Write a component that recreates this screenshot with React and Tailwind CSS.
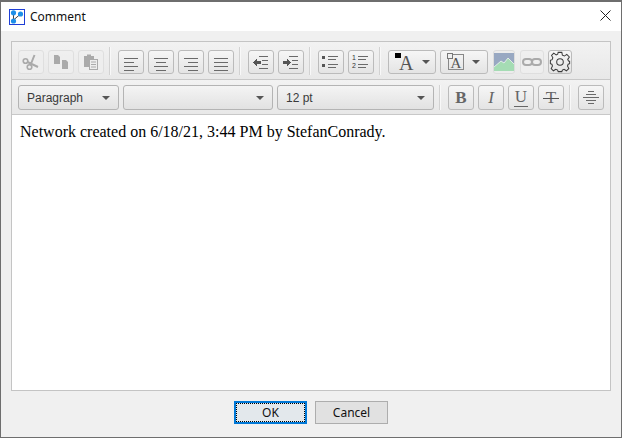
import React from 'react';

const Lines = ({ rows }) => (
  <svg width="20" height="20" viewBox="0 0 20 20" fill="none" stroke="#6a6a6a" strokeWidth="1" shapeRendering="crispEdges">
    {rows.map(([a, b], i) => <path key={i} d={`M${a} ${6.5 + i * 4}H${b}`} />)}
  </svg>
);

const IndentIcon = ({ flip }) => (
  <svg width="20" height="20" viewBox="0 0 20 20" fill="none" stroke="#6a6a6a" shapeRendering="crispEdges">
    <path d="M8 4.5H17M11 8.5H17M11 12.5H17M8 16.5H17" strokeWidth="1" />
    {flip
      ? <path d="M2 9H6V7L10 10.5L6 14V12H2Z" fill="#555" stroke="none" />
      : <path d="M10 9H6V7L2 10.5L6 14V12H10Z" fill="#555" stroke="none" />}
  </svg>
);

const Btn = ({ children, disabled, w = 'w-[26px]' }) => (
  <div className={`${w} h-full flex items-center justify-center rounded-[3px] border ${disabled ? 'border-[#dcdcdc] bg-[#efefef] opacity-80' : 'border-[#bbbbbb] bg-gradient-to-b from-[#f6f6f6] to-[#e4e4e4]'}`}>
    {children}
  </div>
);

const Sep = () => <div className="ml-[5px] mr-[7px] w-[2px] h-[28px] self-center border-l border-[#d2d2d2] bg-[#f8f8f8]" />;

const Arrow = () => <div className="w-0 h-0 border-x-[4px] border-x-transparent border-t-[4px] border-t-[#555]" />;

const Select = ({ label, w }) => (
  <div className={`${w} h-full flex items-center justify-between pl-[8px] pr-[8px] rounded-[3px] border border-[#b4b4b4] bg-gradient-to-b from-[#f4f4f4] to-[#e2e2e2] text-[12px] text-[#3a3a3a]`}>
    <span>{label}</span>
    <Arrow />
  </div>
);

const Gear = () => (
  <svg width="24" height="24" viewBox="0 0 24 24" fill="none" stroke="#3a3a3a" strokeWidth="1.1">
    <circle cx="12" cy="12" r="3.6" />
    <path d="M10 1.5H14L14.6 4.6L16.8 5.5L19.4 3.7L22.2 6.5L20.4 9.1L21.3 10.9L22.5 11.2V13.8L20.9 14.4L20.2 16.4L21.6 19.2L19 21.6L16.4 20L14.6 20.9L14 22.5H10L9.4 20.9L7.4 20L4.8 21.6L2.4 19.2L3.8 16.4L3.1 14.4L1.5 13.8V10.2L3.4 9.5L4.2 7.4L2.8 4.8L5.2 2.4L7.8 4.2L9.5 3.4Z" />
  </svg>
);

const WindowIcon = () => (
  <svg width="16" height="16" viewBox="0 0 16 16">
    <rect x="0.5" y="0.5" width="15" height="15" fill="#fff" stroke="#1f3fd6" />
    <path d="M4.5 4V12M4.5 11L11.5 5" stroke="#444" strokeWidth="1" />
    <circle cx="4.5" cy="3.8" r="2.6" fill="#1d8fe8" />
    <circle cx="4.5" cy="12" r="2.6" fill="#1d8fe8" />
    <circle cx="11.5" cy="5" r="2.6" fill="#1d8fe8" />
  </svg>
);

const App = () => {
  return (
    <div className="w-[622px] h-[438px] flex flex-col border border-t-2 border-[#6e6e6e] bg-[#f0f0f0] font-['Liberation_Sans',sans-serif] overflow-hidden">
      <div className="h-[29px] shrink-0 bg-white flex items-center pl-[8px] pr-[10px]">
        <WindowIcon />
        <span className="ml-[5px] text-[12px] text-[#111] font-['Noto_Sans',sans-serif]">Comment</span>
        <svg className="ml-auto mb-[2px]" width="11" height="11" viewBox="0 0 11 11" stroke="#222" strokeWidth="1">
          <path d="M0.5 0.5L10.5 10.5M10.5 0.5L0.5 10.5" />
        </svg>
      </div>

      <div className="flex-1 flex flex-col px-[10px] pt-[10px] min-h-0">
        <div className="h-[350px] flex flex-col border border-[#c4c4c4]">
          <div className="h-[38px] shrink-0 flex items-center pl-[6px] pt-[1px] bg-gradient-to-b from-[#f2f2f2] to-[#e8e8e8] border-b border-[#c8c8c8]">
            <div className="h-[24px] mt-[1px] flex items-center gap-[4px]">
              <Btn disabled>
                <svg width="20" height="20" viewBox="0 0 20 20" fill="none" stroke="#9a9a9a" strokeWidth="1.6">
                  <circle cx="4.5" cy="9" r="2.3" />
                  <circle cx="8.5" cy="15" r="2.3" />
                  <path d="M6.5 10L17 15M9.5 13L13.5 3" strokeWidth="2" />
                </svg>
              </Btn>
              <Btn disabled>
                <svg width="18" height="18" viewBox="0 0 18 18" fill="#9a9a9a">
                  <path d="M2 2H6L8 4V11H2Z M10 7H14L16 9V16H10Z" />
                </svg>
              </Btn>
              <Btn disabled>
                <svg width="18" height="18" viewBox="0 0 18 18">
                  <path d="M2 3H5V1.5H9V3H12V14H2Z" fill="#9a9a9a" />
                  <rect x="7.5" y="6.5" width="8" height="10" fill="#eee" stroke="#9a9a9a" />
                  <path d="M9 9H14M9 11.5H14M9 14H14" stroke="#9a9a9a" />
                </svg>
              </Btn>
            </div>
            <Sep />
            <div className="h-[24px] mt-[1px] flex items-center gap-[4px]">
              <Btn><Lines rows={[[3, 17], [3, 13], [3, 17], [3, 13]]} /></Btn>
              <Btn><Lines rows={[[3, 17], [5, 15], [3, 17], [5, 15]]} /></Btn>
              <Btn><Lines rows={[[3, 17], [7, 17], [3, 17], [7, 17]]} /></Btn>
              <Btn><Lines rows={[[3, 17], [3, 17], [3, 17], [3, 17]]} /></Btn>
            </div>
            <Sep />
            <div className="h-[24px] mt-[1px] flex items-center gap-[4px]">
              <Btn><IndentIcon /></Btn>
              <Btn><IndentIcon flip /></Btn>
            </div>
            <Sep />
            <div className="h-[24px] mt-[1px] flex items-center gap-[4px]">
              <Btn>
                <svg width="20" height="16" viewBox="0 0 20 16" stroke="#6a6a6a" shapeRendering="crispEdges">
                  <rect x="1" y="2" width="3" height="3" fill="#555" stroke="none" />
                  <rect x="1" y="10" width="3" height="3" fill="#555" stroke="none" />
                  <path d="M7 2.5H17M7 5.5H15M7 10.5H17M7 13.5H15" />
                </svg>
              </Btn>
              <Btn>
                <div className="relative w-[20px] h-[16px]">
                  <span className="absolute left-[1px] top-[0px] text-[7px] leading-[8px] text-[#333]">1</span>
                  <span className="absolute left-[1px] top-[8px] text-[7px] leading-[8px] text-[#333]">2</span>
                  <svg className="absolute left-0 top-0" width="20" height="16" viewBox="0 0 20 16" stroke="#6a6a6a" shapeRendering="crispEdges">
                    <path d="M7 2.5H17M7 5.5H15M7 10.5H17M7 13.5H15" />
                  </svg>
                </div>
              </Btn>
            </div>
            <Sep />
            <div className="h-[24px] mt-[1px] flex items-center">
              <Btn w="w-[48px]">
                <div className="relative w-[20px] h-[22px] font-['Liberation_Serif',serif] text-[20px] leading-[24px] text-[#555] text-right pr-[1px]">
                  A
                  <div className="absolute left-0 top-[2px] w-[6px] h-[5px] bg-black" />
                </div>
                <div className="ml-[7px]"><Arrow /></div>
              </Btn>
              <div className="w-[4px]" />
              <Btn w="w-[48px]">
                <div className="relative w-[16px] h-[16px] border border-[#888] font-['Liberation_Serif',serif] text-[15px] leading-[16px] text-[#555] text-center">
                  A
                  <div className="absolute left-[-2px] top-[-2px] w-[6px] h-[6px] border border-[#777] bg-[#f0f0f0]" />
                </div>
                <div className="ml-[8px]"><Arrow /></div>
              </Btn>
              <div className="w-[5px]" />
              <Btn disabled={false} w="w-[22px] !border-[#dcdcdc] !bg-none !bg-[#ececec]">
                <svg width="20" height="18" viewBox="0 0 20 18">
                  <rect width="20" height="18" fill="#98a8c2" />
                  <path d="M0 18V14L7 8L10 10L14 5L20 11V18Z" fill="#a5dcb4" />
                  <path d="M0 14L7 8L10 10L14 5L20 11" fill="none" stroke="#f2f5f2" strokeWidth="0.8" />
                </svg>
              </Btn>
              <div className="w-[5px]" />
              <Btn disabled w="w-[24px]">
                <svg width="20" height="10" viewBox="0 0 20 10" fill="none" stroke="#9a9a9a" strokeWidth="2">
                  <rect x="1" y="2" width="9" height="6" rx="3" />
                  <rect x="10" y="2" width="9" height="6" rx="3" />
                </svg>
              </Btn>
              <div className="w-[4px]" />
              <Btn w="w-[24px]"><Gear /></Btn>
            </div>
          </div>

          <div className="h-[35px] shrink-0 flex items-center pl-[6px] pt-[1px] bg-gradient-to-b from-[#f2f2f2] to-[#e8e8e8] border-b border-[#c8c8c8]">
            <div className="h-[25px] flex items-center gap-[4px]">
              <Select label="Paragraph" w="w-[101px]" />
              <Select label="" w="w-[150px]" />
              <Select label="12 pt" w="w-[157px]" />
            </div>
            <div className="ml-[5px] mr-[7px] w-[2px] h-[25px] border-l border-[#d2d2d2] bg-[#f8f8f8]" />
            <div className="h-[25px] flex items-center gap-[4px] font-['Liberation_Serif',serif] text-[17px] text-[#666]">
              <Btn><span className="font-bold">B</span></Btn>
              <Btn><span className="italic">I</span></Btn>
              <Btn>
                <span className="border-b border-[#666] px-[1px] leading-[18px]">U</span>
              </Btn>
              <Btn>
                <div className="relative px-[3px] leading-[18px]">
                  T
                  <div className="absolute left-0 right-0 top-[9px] h-px bg-[#555]" />
                </div>
              </Btn>
            </div>
            <div className="ml-[5px] mr-[7px] w-[2px] h-[25px] border-l border-[#d2d2d2] bg-[#f8f8f8]" />
            <div className="h-[25px] flex items-center">
              <Btn>
                <svg width="18" height="18" viewBox="0 0 18 18" stroke="#6a6a6a" shapeRendering="crispEdges">
                  <path d="M6 2.5H12M4 5.5H14M1 8.5H17M4 11.5H14M6 14.5H12" />
                </svg>
              </Btn>
            </div>
          </div>

          <div className="flex-1 bg-white px-[8px] pt-[8px] font-['Liberation_Serif',serif] text-[16px] leading-[18px] text-black">
            Network created on 6/18/21, 3:44 PM by StefanConrady.
          </div>
        </div>

        <div className="flex-1 flex items-start justify-center gap-[8px] pt-[10px] text-[12px] text-[#111] font-['Noto_Sans',sans-serif]">
          <div className="w-[73px] h-[23px] flex items-center justify-center border-2 border-[#0078d7] bg-[#e3e8ec] outline-1 outline-dotted outline-black -outline-offset-3">OK</div>
          <div className="w-[73px] h-[23px] flex items-center justify-center border border-[#adadad] bg-[#e1e1e1]">Cancel</div>
        </div>
      </div>
    </div>
  );
};

export default App;
